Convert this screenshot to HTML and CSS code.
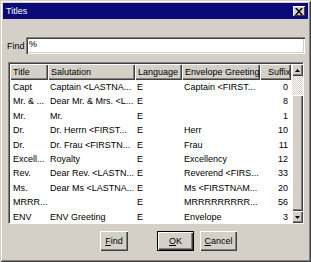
FILE: index.html
```html
<!DOCTYPE html>
<html lang="en">
<head>
    <meta charset="UTF-8">
    <title>Titles</title>
    <link rel="stylesheet" href="styles.css">
</head>
<body>
<div class="window">
    <div class="titlebar">
        <span class="title">Titles</span>
        <span class="close">
            <svg width="8" height="7" viewBox="0 0 8 7"><path d="M0 0h2l2 2.5L6 0h2L5 3.5 8 7H6L4 4.5 2 7H0l3-3.5z" fill="#000"/></svg>
        </span>
    </div>
    <div class="content">
        <div class="find-row">
            <span class="find-label">Find</span>
            <div class="input">%</div>
        </div>
        <div class="table">
            <div class="grid">
                <div class="th">Title</div>
                <div class="th">Salutation</div>
                <div class="th">Language</div>
                <div class="th">Envelope Greeting</div>
                <div class="th th-suffix">Suffix</div>

                <div class="td">Capt</div><div class="td">Captain &lt;LASTNA...</div><div class="td">E</div><div class="td">Captain &lt;FIRST...</div><div class="td num">0</div>
                <div class="td">Mr. &amp; ...</div><div class="td">Dear Mr. &amp; Mrs. &lt;L...</div><div class="td">E</div><div class="td"></div><div class="td num">8</div>
                <div class="td">Mr.</div><div class="td">Mr.</div><div class="td">E</div><div class="td"></div><div class="td num">1</div>
                <div class="td">Dr.</div><div class="td">Dr. Herrn &lt;FIRST...</div><div class="td">E</div><div class="td">Herr</div><div class="td num">10</div>
                <div class="td">Dr.</div><div class="td">Dr. Frau &lt;FIRSTN...</div><div class="td">E</div><div class="td">Frau</div><div class="td num">11</div>
                <div class="td">Excell...</div><div class="td">Royalty</div><div class="td">E</div><div class="td">Excellency</div><div class="td num">12</div>
                <div class="td">Rev.</div><div class="td">Dear Rev. &lt;LASTN...</div><div class="td">E</div><div class="td">Reverend &lt;FIRS...</div><div class="td num">33</div>
                <div class="td">Ms.</div><div class="td">Dear Ms &lt;LASTNA...</div><div class="td">E</div><div class="td">Ms &lt;FIRSTNAM...</div><div class="td num">20</div>
                <div class="td">MRRR...</div><div class="td"></div><div class="td">E</div><div class="td">MRRRRRRRRR...</div><div class="td num">56</div>
                <div class="td">ENV</div><div class="td">ENV Greeting</div><div class="td">E</div><div class="td">Envelope</div><div class="td num">3</div>
            </div>
            <div class="scrollbar">
                <div class="sb-btn sb-up">
                    <svg width="5" height="3" viewBox="0 0 5 3"><path d="M2.5 0L5 3H0z" fill="#000"/></svg>
                </div>
                <div class="sb-track"></div>
                <div class="sb-thumb"></div>
                <div class="sb-btn sb-down">
                    <svg width="5" height="3" viewBox="0 0 5 3"><path d="M0 0h5L2.5 3z" fill="#000"/></svg>
                </div>
            </div>
        </div>
        <div class="buttons">
            <button class="btn btn-find"><u>F</u>ind</button>
            <button class="btn btn-ok"><u>O</u>K</button>
            <button class="btn btn-cancel"><u>C</u>ancel</button>
        </div>
    </div>
</div>
</body>
</html>
```

FILE: styles.css
```css
body {
    margin: 0;
    padding: 0;
    font-family: "Liberation Sans", Arial, sans-serif;
    font-size: 9px;
    background-color: #d4d0c8;
}
.window {
    width: 311px;
    height: 262px;
    box-sizing: border-box;
    padding: 3px;
    background-color: #d4d0c8;
    box-shadow: inset 1px 1px #d4d0c8, inset -1px -1px #404040,
                inset 2px 2px #ffffff, inset -2px -2px #808080;
}
.titlebar {
    height: 16px;
    background-color: #0a0a78;
    color: white;
    display: flex;
    align-items: flex-start;
    justify-content: space-between;
}
.title {
    padding-left: 3px;
    line-height: 16px;
}
.close {
    width: 12px;
    height: 10px;
    margin: 3px 3px 0 0;
    background-color: #d4d0c8;
    box-shadow: inset 1px 1px #ffffff, inset -1px -1px #404040;
    display: flex;
    align-items: center;
    justify-content: center;
}
.content {
    padding: 18px 3px 0 4px;
}
.find-row {
    display: flex;
    align-items: center;
    height: 17px;
}
.find-label {
    width: 19px;
}
.input {
    flex: 1;
    height: 17px;
    box-sizing: border-box;
    background: white;
    padding-left: 3px;
    line-height: 14px;
    box-shadow: inset 1px 1px #808080, inset 2px 2px #404040,
                inset -1px -1px #ffffff, inset -2px -2px #d4d0c8;
}
.table {
    margin: 8px 1px 0 1px;
    border: 1px solid;
    border-color: #808080 #ffffff #ffffff #808080;
    display: flex;
    height: 162px;
    box-sizing: border-box;
    box-shadow: inset 1px 1px #404040;
    padding: 1px 0 0 1px;
    background: white;
}
.grid {
    flex: 1;
    display: grid;
    grid-template-columns: 38px 87px 47px 78px 31px;
    grid-template-rows: 16px repeat(10, 14.4px);
    overflow: hidden;
}
.th {
    background-color: #d4d0c8;
    line-height: 16px;
    padding-left: 3px;
    white-space: nowrap;
    overflow: hidden;
    box-shadow: inset 1px 1px #ffffff, inset -1px -1px #404040, inset -2px -2px #808080;
}
.th-suffix {
    padding-left: 8px;
    text-overflow: clip;
}
.td {
    line-height: 14.4px;
    padding-left: 2px;
    white-space: nowrap;
    overflow: hidden;
}
.td:nth-child(5n+1) {
    padding-left: 3px;
}
.td.num {
    text-align: right;
    padding: 0 3px 0 0;
}
.scrollbar {
    width: 11px;
    display: flex;
    flex-direction: column;
}
.sb-btn {
    height: 12px;
    background-color: #d4d0c8;
    box-shadow: inset 1px 1px #ffffff, inset -1px -1px #404040, inset -2px -2px #808080;
    display: flex;
    align-items: center;
    justify-content: center;
}
.sb-track {
    height: 19px;
    background: repeating-conic-gradient(#ffffff 0 25%, #d4d0c8 0 50%) 0 0 / 2px 2px;
}
.sb-thumb {
    flex: 1;
    background-color: #d4d0c8;
    box-shadow: inset 1px 1px #ffffff, inset -1px -1px #404040, inset -2px -2px #808080;
}
.buttons {
    display: flex;
    margin-top: 7px;
    padding-left: 93px;
}
.btn {
    height: 20px;
    font-family: "Liberation Sans", Arial, sans-serif;
    font-size: 9px;
    color: black;
    background-color: #d4d0c8;
    border: none;
    padding: 0;
    box-shadow: inset 1px 1px #ffffff, inset -1px -1px #404040, inset -2px -2px #808080;
}
.btn-find {
    width: 28px;
    margin-right: 29px;
}
.btn-ok {
    width: 37px;
    margin-right: 6px;
    border: 1px solid #000000;
}
.btn-cancel {
    width: 37px;
}
```
